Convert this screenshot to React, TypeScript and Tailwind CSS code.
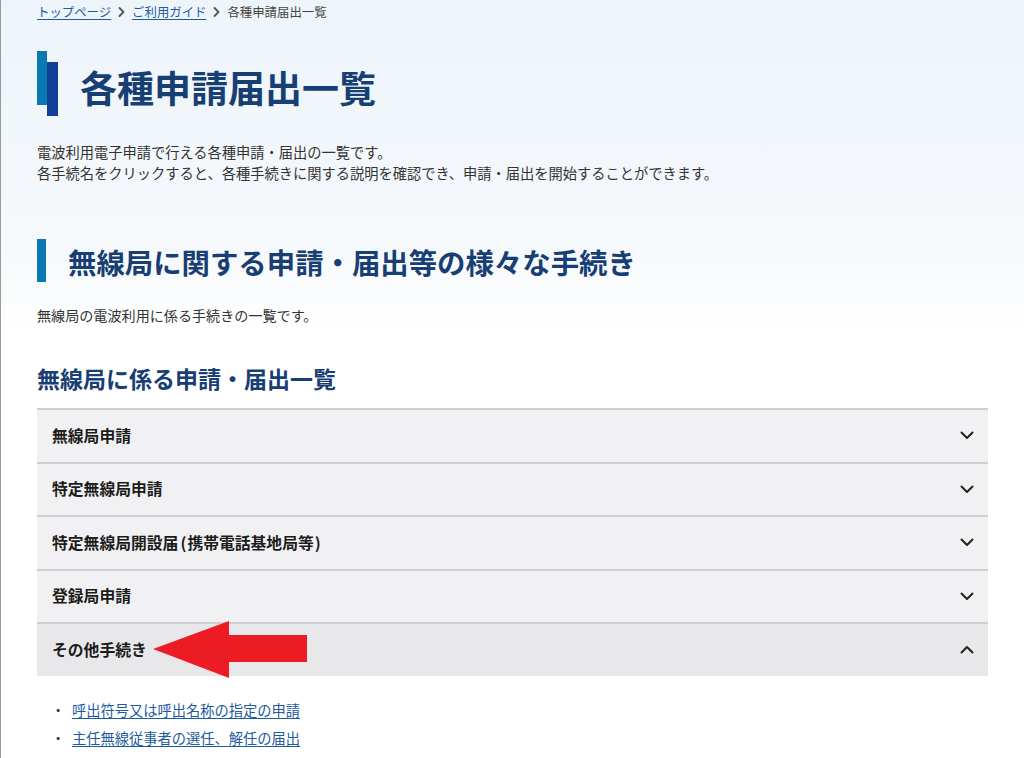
import React from "react";

const rows = [
  { label: <>無線局申請</>, open: false },
  { label: <>特定無線局申請</>, open: false },
  {
    label: (
      <>
        特定無線局開設届<span className="ml-[2px] mr-[1px]">(</span>携帯電話基地局等<span className="ml-[1px]">)</span>
      </>
    ),
    open: false,
  },
  { label: <>登録局申請</>, open: false },
  { label: <>その他手続き</>, open: true },
];

function Chevron({ up }: { up?: boolean }) {
  return (
    <svg width="14" height="9" viewBox="0 0 14 9" fill="none">
      {up ? (
        <path d="M1.5 7.5 L7 2 L12.5 7.5" stroke="#222" strokeWidth="2" strokeLinecap="round" strokeLinejoin="round" />
      ) : (
        <path d="M1.5 1.5 L7 7 L12.5 1.5" stroke="#222" strokeWidth="2" strokeLinecap="round" strokeLinejoin="round" />
      )}
    </svg>
  );
}

function Crumb() {
  return (
    <svg width="7" height="10" viewBox="0 0 7 10" fill="none" className="mx-[7px]">
      <path d="M1.5 1 L5.5 5 L1.5 9" stroke="#555" strokeWidth="1.8" strokeLinecap="round" strokeLinejoin="round" />
    </svg>
  );
}

export default function App() {
  return (
    <div className="relative w-[1024px] h-[758px] overflow-hidden border-l border-[#9a9a9a] bg-[linear-gradient(to_bottom,#edf4fa_0px,#f6f9fc_250px,#ffffff_330px)] font-['Noto_Sans_CJK_JP','Noto_Sans',sans-serif] text-[#333]">
      <div className="flex flex-col pl-[36px] pr-[36px]">
        {/* breadcrumb */}
        <div className="h-[24px] flex items-center text-[12.4px] leading-none">
          <a className="text-[#1e5a9e] underline underline-offset-2">トップページ</a>
          <Crumb />
          <a className="text-[#1e5a9e] underline underline-offset-2">ご利用ガイド</a>
          <Crumb />
          <span className="text-[#444]">各種申請届出一覧</span>
        </div>

        {/* title */}
        <div className="mt-[27px] flex h-[65px]">
          <div className="flex w-[21px] h-[65px]">
            <div className="w-[10px] h-[54px] bg-[#0a78b3] self-start" />
            <div className="w-[11px] h-[54px] bg-[#123f96] self-end" />
          </div>
          <h1 className="ml-[22px] mt-[12px] text-[37px] leading-[48px] font-bold text-[#173f73]">
            各種申請届出一覧
          </h1>
        </div>

        {/* intro */}
        <div className="mt-[25px] text-[14.25px] leading-[21px] text-[#333]">
          <p>電波利用電子申請で行える各種申請・届出の一覧です。</p>
          <p>各手続名をクリックすると、各種手続きに関する説明を確認でき、申請・届出を開始することができます。</p>
        </div>

        {/* section heading */}
        <div className="mt-[56px] flex items-center h-[43px]">
          <div className="w-[9px] h-[43px] bg-[#0a78b3]" />
          <h2 className="ml-[22px] mt-[3px] text-[28.4px] leading-[38px] font-bold text-[#173f73]">
            無線局に関する申請・届出等の様々な手続き
          </h2>
        </div>

        <p className="mt-[23px] text-[14.1px] leading-[21px] text-[#333]">無線局の電波利用に係る手続きの一覧です。</p>

        <h3 className="mt-[36px] text-[23px] leading-[32px] font-bold text-[#173f73]">無線局に係る申請・届出一覧</h3>

        {/* accordion */}
        <div className="mt-[14px] flex flex-col">
          {rows.map((r, i) => (
            <div
              key={i}
              className={`h-[53.5px] border-t-2 border-[#cfcfd2] flex items-center justify-between pl-[15px] pr-[14px] ${
                r.open ? "bg-[#e8e8eb]" : "bg-[#f1f1f3]"
              }`}
            >
              <span className="text-[15.8px] font-bold text-[#1c1c1c]">{r.label}</span>
              <Chevron up={r.open} />
            </div>
          ))}
        </div>

        {/* list */}
        <ul className="mt-[20px] pl-[14px] text-[14.25px] leading-[28px]">
          <li className="flex">
            <span className="w-[21px] text-[#333]">・</span>
            <a className="text-[#1e5a9e] underline underline-offset-2">呼出符号又は呼出名称の指定の申請</a>
          </li>
          <li className="flex">
            <span className="w-[21px] text-[#333]">・</span>
            <a className="text-[#1e5a9e] underline underline-offset-2">主任無線従事者の選任、解任の届出</a>
          </li>
        </ul>
      </div>

      {/* red arrow annotation */}
      <svg className="absolute left-[151px] top-[620px]" width="158" height="60" viewBox="0 0 158 60">
        <polygon points="1,29 77,1 77,15 155,15 155,42 77,42 77,58" fill="#ed1c24" />
      </svg>
    </div>
  );
}
